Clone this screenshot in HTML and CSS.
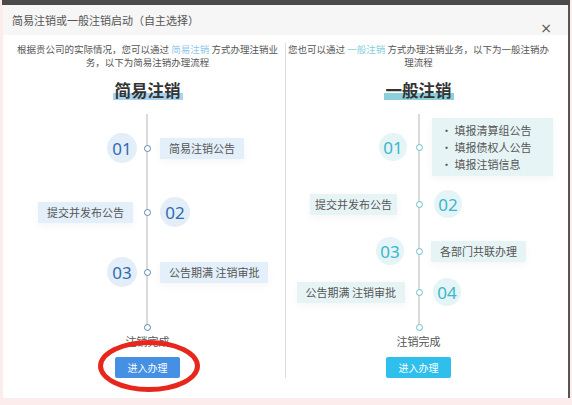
FILE: index.html
```html
<!DOCTYPE html>
<html lang="zh-CN">
<head>
<meta charset="utf-8">
<title>简易注销或一般注销启动</title>
<link rel="stylesheet" href="styles.css">
</head>
<body>
<div class="page">
  <div class="topbar"></div>
  <div class="dialog">
    <div class="header">
      <div class="header-title">简易注销或一般注销启动（自主选择）</div>
      <div class="close">×</div>
    </div>
    <div class="body">
      <section class="col col-left">
        <p class="intro">根据贵公司的实际情况，您可以通过 <span class="hl-blue">简易注销</span> 方式办理注销业<br>务，以下为简易注销办理流程</p>
        <h2 class="title title-blue"><span>简易注销</span></h2>
        <div class="timeline tl-left">
          <div class="step ls1">
            <div class="l"><span class="num num-blue m-r3">01</span></div>
            <div class="n"><span class="node node-blue"></span></div>
            <div class="r"><span class="box box-blue m-l6">简易注销公告</span></div>
          </div>
          <div class="step ls2">
            <div class="l"><span class="box box-blue m-r7">提交并发布公告</span></div>
            <div class="n"><span class="node node-blue"></span></div>
            <div class="r"><span class="num num-blue m-l6">02</span></div>
          </div>
          <div class="step ls3">
            <div class="l"><span class="num num-blue m-r3">03</span></div>
            <div class="n"><span class="node node-blue"></span></div>
            <div class="r"><span class="box box-blue m-l6">公告期满 注销审批</span></div>
          </div>
          <div class="step ls-end">
            <div class="l"></div>
            <div class="n"><span class="node node-blue"></span></div>
            <div class="r"></div>
          </div>
        </div>
        <div class="done">注销完成</div>
        <div class="btnwrap">
          <button class="btn btn-blue">进入办理</button>
          <span class="ring"></span>
        </div>
      </section>
      <section class="col col-right">
        <p class="intro">您也可以通过 <span class="hl-teal">一般注销</span> 方式办理注销业务，以下为一般注销办<br>理流程</p>
        <h2 class="title title-teal"><span>一般注销</span></h2>
        <div class="timeline tl-right">
          <div class="step rs1">
            <div class="l"><span class="num num-teal m-r5">01</span></div>
            <div class="n"><span class="node node-teal"></span></div>
            <div class="r">
              <ul class="box box-teal list m-l6">
                <li>填报清算组公告</li>
                <li>填报债权人公告</li>
                <li>填报注销信息</li>
              </ul>
            </div>
          </div>
          <div class="step rs2">
            <div class="l"><span class="box box-teal box-tight m-r15">提交并发布公告</span></div>
            <div class="n"><span class="node node-teal"></span></div>
            <div class="r"><span class="num num-teal m-l8">02</span></div>
          </div>
          <div class="step rs3">
            <div class="l"><span class="num num-teal m-r8">03</span></div>
            <div class="n"><span class="node node-teal"></span></div>
            <div class="r"><span class="box box-teal m-l5">各部门共联办理</span></div>
          </div>
          <div class="step rs4">
            <div class="l"><span class="box box-teal m-r7">公告期满 注销审批</span></div>
            <div class="n"><span class="node node-teal"></span></div>
            <div class="r"><span class="num num-teal m-l7">04</span></div>
          </div>
          <div class="step rs-end">
            <div class="l"></div>
            <div class="n"><span class="node node-teal"></span></div>
            <div class="r"></div>
          </div>
        </div>
        <div class="done">注销完成</div>
        <div class="btnwrap">
          <button class="btn btn-cyan">进入办理</button>
        </div>
      </section>
    </div>
  </div>
</div>
</body>
</html>
```
FILE: styles.css
```css
* { box-sizing: border-box; }
html, body { margin: 0; padding: 0; }
body {
  background: #fdecec;
  font-family: "Noto Sans CJK SC", "Noto Sans", sans-serif;
  color: #555;
  width: 572px;
  height: 405px;
  overflow: hidden;
}
.page { padding-left: 2px; }
.topbar {
  height: 5px;
  width: 568px;
  background: #4b4b4b;
}
.dialog {
  margin-left: 1px;
  width: 567px;
  height: 393px;
  background: #fff;
  border-right: 2px solid #555;
  display: flex;
  flex-direction: column;
}
.header {
  height: 30px;
  background: #f6f6f6;
  display: flex;
  justify-content: space-between;
  padding: 0 16px 0 9px;
}
.header-title {
  font-size: 11px;
  line-height: 30px;
  color: #555;
}
.close {
  align-self: flex-end;
  font-size: 14px;
  line-height: 14px;
  color: #555;
  font-family: "DejaVu Sans", sans-serif;
}
.body {
  display: grid;
  grid-template-columns: 282px 282px;
  margin-top: 8px;
  height: 335px;
}
.col {
  display: flex;
  flex-direction: column;
  align-items: center;
}
.col-left { padding-left: 7px; }
.col-right { border-left: 1px solid #dcdcdc; padding-right: 16px; }
.intro {
  margin: 0;
  font-size: 9.5px;
  line-height: 13px;
  text-align: center;
  color: #555;
  white-space: nowrap;
}
.hl-blue { color: #8fc6ea; }
.hl-teal { color: #86d0dc; }
.title {
  margin: 10px 0 0;
  font-size: 16.5px;
  line-height: 22px;
  font-weight: 700;
  color: #333;
}
.title span { padding: 0 2px; }
.title-blue span {
  background: linear-gradient(transparent 62%, #a9d4f1 62%, #a9d4f1 92%, transparent 92%);
}
.title-teal span {
  background: linear-gradient(transparent 62%, #8bd0db 62%, #8bd0db 92%, transparent 92%);
}

.timeline {
  position: relative;
  align-self: stretch;
  margin-top: 13px;
  display: flex;
  flex-direction: column;
}
.tl-left { --c1: 130px; }
.tl-right { --c1: 126px; }
.timeline::before {
  content: "";
  position: absolute;
  top: 0;
  bottom: 3px;
  left: calc(var(--c1) + 6px);
  width: 2px;
  background: #dadada;
}
.step {
  display: grid;
  grid-template-columns: var(--c1) 14px 1fr;
  align-items: center;
}
.step .l { display: flex; justify-content: flex-end; }
.step .r { display: flex; justify-content: flex-start; }
.step .n { display: flex; justify-content: center; }

.ls1 { margin-top: 19px; }
.ls2 { margin-top: 34px; }
.ls3 { margin-top: 30px; }
.ls-end { margin-top: 37px; }
.rs1 { margin-top: 4px; }
.rs2 { margin-top: 14px; }
.rs3 { margin-top: 19px; }
.rs4 { margin-top: 13px; }
.rs-end { margin-top: 18px; }

.node {
  display: block;
  width: 7px;
  height: 7px;
  border-radius: 50%;
  background: #fff;
  position: relative;
  z-index: 1;
}
.node-blue { border: 1.5px solid #5f88ad; }
.node-teal { border: 1.5px solid #68bfcb; }

.num {
  display: flex;
  align-items: center;
  justify-content: center;
  border-radius: 50%;
  font-size: 17px;
  font-family: "Noto Sans", "Open Sans", sans-serif;
  font-weight: 400;
}
.num-blue {
  width: 30px; height: 30px;
  background: #e3eef9;
  color: #2e6db0;
}
.num-teal {
  width: 28px; height: 28px;
  background: #e5f4f6;
  color: #3bb7c9;
}
.box {
  display: block;
  font-size: 11px;
  line-height: 21px;
  height: 21px;
  padding: 0 9px;
  color: #555;
  white-space: nowrap;
  box-shadow: 0 3px 8px rgba(0, 0, 0, 0.04);
}
.box-tight { padding: 0 5px; }
.box-blue { background: #e3effa; }
.box-teal { background: #e7f4f6; }
.list {
  margin: 0;
  height: 58px;
  width: 121px;
  padding: 4px 9px;
  list-style: none;
  line-height: 17px;
}
.list li::before { content: "• "; }

.m-r3 { margin-right: 3px; }
.m-r5 { margin-right: 5px; }
.m-r7 { margin-right: 7px; }
.m-r8 { margin-right: 8px; }
.m-r15 { margin-right: 15px; }
.m-l5 { margin-left: 5px; }
.m-l6 { margin-left: 6px; }
.m-l7 { margin-left: 7px; }
.m-l8 { margin-left: 8px; }

.done {
  margin-top: 3px;
  font-size: 11px;
  line-height: 14px;
  color: #555;
}
.btnwrap {
  position: relative;
  margin-top: 9px;
}
.btn {
  display: block;
  width: 65px;
  height: 21px;
  border: 0;
  border-radius: 2px;
  color: #fff;
  font-family: "Noto Sans CJK SC", sans-serif;
  font-size: 10px;
  line-height: 21px;
  padding: 0;
}
.btn-blue { background: #4590e3; }
.btn-cyan { background: #2ebfec; }
.ring {
  position: absolute;
  left: -17px;
  right: -20px;
  top: -17px;
  bottom: -14px;
  border: 5px solid #e8271c;
  border-radius: 50%;
}
```
